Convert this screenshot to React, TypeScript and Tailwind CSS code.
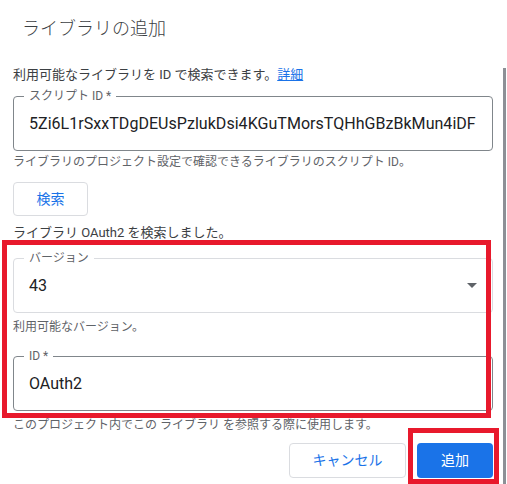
import * as React from 'react'

const font = { fontFamily: 'Roboto, "Noto Sans CJK JP", sans-serif' }

function Outlined({
  label,
  children,
  light,
  className = '',
}: {
  label: string
  children: React.ReactNode
  light?: boolean
  className?: string
}) {
  return (
    <div
      className={`relative flex h-[55px] w-[480px] items-center rounded-[4px] border px-[15px] ${
        light ? 'border-[#dadce0]' : 'border-[#80868b]'
      } ${className}`}
    >
      <span className="absolute left-[10px] top-[-9px] bg-white px-[5px] text-[12px] leading-[16px] text-[#5f6368]">
        {label}
      </span>
      {children}
    </div>
  )
}

export default function App() {
  return (
    <div style={font} className="relative h-[484px] w-[507px] overflow-hidden bg-white">
      <div className="pl-[22px] pt-[17px] text-[18px] font-light leading-[24px] text-[#3c4043]">ライブラリの追加</div>

      <div className="flex flex-col pl-[13px]">
        <p className="mt-[25px] text-[13px] leading-[18px] text-[#3c4043]">
          利用可能なライブラリを ID で検索できます。
          <span className="text-[#1a73e8] underline">詳細</span>
        </p>

        <Outlined label="スクリプト ID *" className="mt-[12px]">
          <span className="text-[16px] tracking-[0.04px] text-[#202124]">
            5Zi6L1rSxxTDgDEUsPzlukDsi4KGuTMorsTQHhGBzBkMun4iDF
          </span>
        </Outlined>
        <p className="mt-[3px] text-[12px] leading-[16px] text-[#5f6368]">
          ライブラリのプロジェクト設定で確認できるライブラリのスクリプト ID。
        </p>

        <button className="mt-[12px] h-[34px] w-[75px] rounded-[4px] border border-[#dadce0] text-[14px] text-[#1a73e8]">
          検索
        </button>

        <p className="mt-[8px] text-[13px] leading-[18px] text-[#3c4043]">ライブラリ OAuth2 を検索しました。</p>

        <Outlined label="バージョン" light className="mt-[16px] justify-between">
          <span className="text-[16px] text-[#202124]">43</span>
          <svg width="10" height="5" viewBox="0 0 10 5">
            <path d="M0 0h10L5 5z" fill="#5f6368" />
          </svg>
        </Outlined>
        <p className="mt-[6px] text-[12px] leading-[16px] text-[#5f6368]">利用可能なバージョン。</p>

        <Outlined label="ID *" className="mt-[21px]">
          <span className="text-[16px] text-[#202124]">OAuth2</span>
        </Outlined>
        <p className="mt-[6px] text-[12px] leading-[16px] text-[#5f6368]">
          このプロジェクト内でこの ライブラリ を参照する際に使用します。
        </p>

        <div className="mt-[10px] flex justify-end gap-[11px] pr-[14px]">
          <button className="h-[35px] w-[117px] rounded-[4px] border border-[#dadce0] text-[14px] text-[#1a73e8]">
            キャンセル
          </button>
          <button className="h-[35px] w-[76px] rounded-[4px] bg-[#1a73e8] text-[14px] text-white">追加</button>
        </div>
      </div>

      {/* scrollbar */}
      <div className="absolute left-[503px] top-[68px] h-[416px] w-[3px] bg-[#8d9096]" />

      {/* red annotations */}
      <div className="absolute left-[2px] top-[240px] h-[178px] w-[489px] border-[5px] border-[#e8192c]" />
      <div className="absolute left-[408px] top-[428px] h-[56px] w-[91px] border-[5px] border-[#e8192c]" />
    </div>
  )
}
